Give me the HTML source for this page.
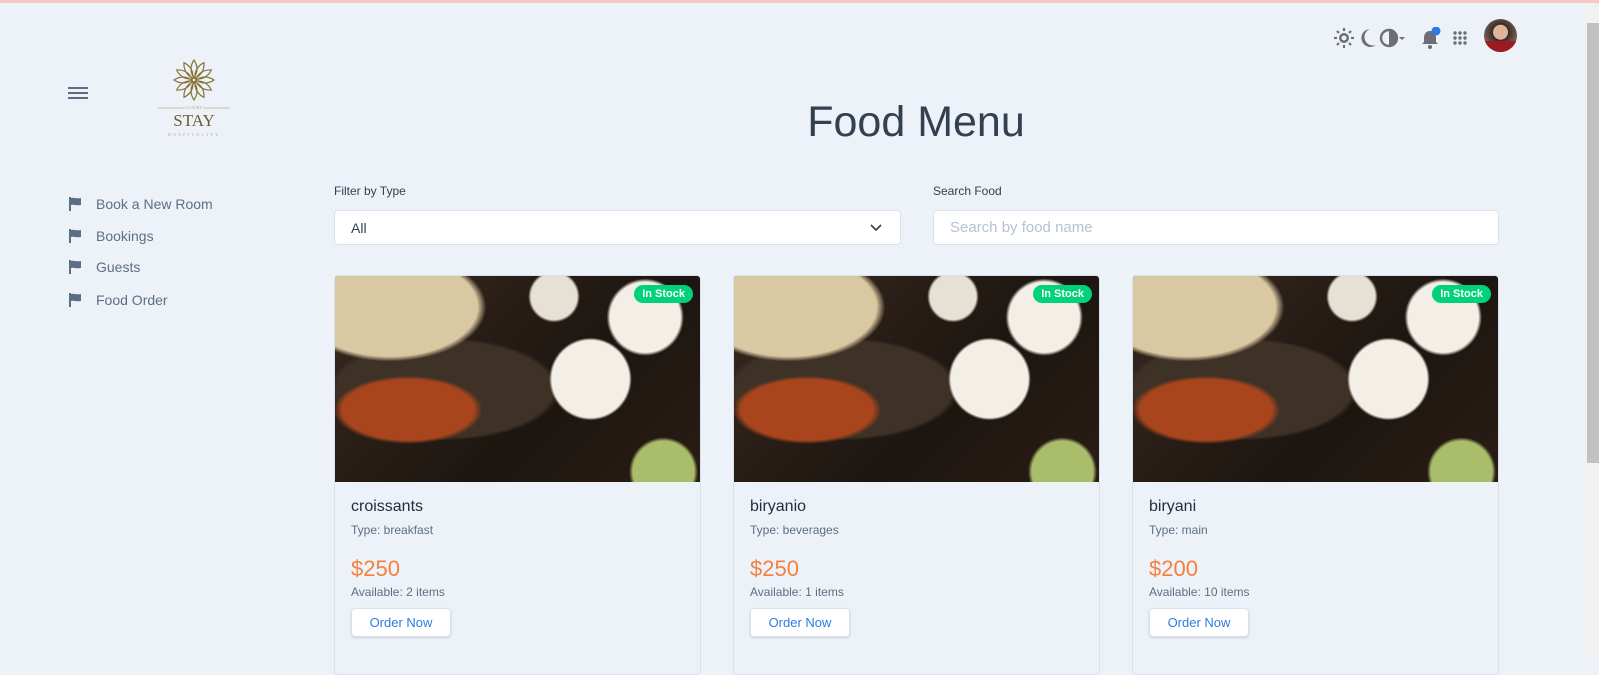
<!DOCTYPE html>
<html><head><meta charset="utf-8"><style>
*{box-sizing:border-box;margin:0;padding:0}
body{width:1599px;height:656px;overflow:hidden;background:#edf2f9;font-family:"Liberation Sans",sans-serif;position:relative;color:#344050}
.topline{position:absolute;left:0;top:0;width:1599px;height:3px;background:#f3c9c2}
.sb{position:absolute;right:0;top:3px;width:14px;height:653px;background:#f1f1f1}
.sb i{position:absolute;left:2px;top:20px;width:12px;height:440px;background:#c1c1c1}
.abs{position:absolute}
.menu div{position:absolute;left:68px;font-size:14px;color:#5e6e82;display:flex;align-items:center}
.menu svg{margin-right:14px}
.card{position:absolute;top:275px;width:367px;height:400px;background:#edf2f9;border:1px solid #d8e2ef;border-radius:4px;overflow:hidden}
.img{height:206px;position:relative;background:
radial-gradient(circle at 85% 20%,#f4efe6 0 10%,transparent 11%),
radial-gradient(circle at 85% 20%,#c9702a 0 8%,transparent 9%),
radial-gradient(circle at 70% 50%,#f4efe6 0 14%,transparent 15%),
radial-gradient(circle at 70% 50%,#c9702a 0 12%,transparent 13%),
radial-gradient(circle at 60% 10%,#e7e0d5 0 8%,transparent 9%),
radial-gradient(ellipse at 15% 15%,#d9c8a2 0 20%,transparent 22%),
radial-gradient(ellipse at 20% 65%,#a8451c 0 16%,transparent 18%),
radial-gradient(ellipse at 30% 55%,#3e3126 0 30%,transparent 32%),
radial-gradient(circle at 90% 95%,#a9bd6b 0 8%,transparent 9%),
linear-gradient(135deg,#3a2a20,#1c1510 60%,#2a1d15)}
.badge{position:absolute;right:7px;top:9px;background:#00d27a;color:#fff;font-weight:bold;font-size:11px;padding:3px 8px;border-radius:12px}
.nm{position:absolute;left:16px;top:222px;font-size:16px;color:#232e3c}
.ty{position:absolute;left:16px;top:247px;font-size:12px;color:#5e6e82}
.pr{position:absolute;left:16px;top:280px;font-size:22px;color:#f5803e}
.av{position:absolute;left:16px;top:309px;font-size:12px;color:#5e6e82}
.bt{position:absolute;left:16px;top:332px;width:100px;height:29px;background:#fff;border:1px solid #d8e2ef;border-radius:4px;box-shadow:0 1px 2px rgba(0,0,0,.15);color:#2c7be5;font-size:13px;display:flex;align-items:center;justify-content:center}
</style></head><body>
<div class="topline"></div>
<div class="sb"><i></i></div>

<svg class="abs" style="left:1334px;top:27px" width="170" height="24" viewBox="0 0 170 24">
<g fill="#6b6e74">
<circle cx="10" cy="11" r="5"/>
<g stroke="#6b6e74" stroke-width="2.2"><line x1="10" y1="1" x2="10" y2="4"/><line x1="10" y1="18" x2="10" y2="21"/><line x1="0" y1="11" x2="3" y2="11"/><line x1="17" y1="11" x2="20" y2="11"/><line x1="3" y1="4" x2="5" y2="6"/><line x1="15" y1="16" x2="17" y2="18"/><line x1="3" y1="18" x2="5" y2="16"/><line x1="15" y1="6" x2="17" y2="4"/></g>
<circle cx="10" cy="11" r="2.5" fill="#edf2f9"/>
<path d="M36 2a9 9 0 1 0 6 16a8 8 0 0 1 -6 -16z"/>
<circle cx="55" cy="11" r="8" fill="none" stroke="#6b6e74" stroke-width="2.4"/><path d="M55 3a8 8 0 0 1 0 16z"/>
<path d="M65 10h6l-3 3z"/>
<path d="M96 4c-4 0-6 3-6 7v4l-2 2h16l-2-2v-4c0-4-2-7-6-7z"/><circle cx="96" cy="20" r="2"/>
<g><circle cx="121" cy="6" r="1.7"/><circle cx="126" cy="6" r="1.7"/><circle cx="131" cy="6" r="1.7"/><circle cx="121" cy="11" r="1.7"/><circle cx="126" cy="11" r="1.7"/><circle cx="131" cy="11" r="1.7"/><circle cx="121" cy="16" r="1.7"/><circle cx="126" cy="16" r="1.7"/><circle cx="131" cy="16" r="1.7"/></g>
</g>
<circle cx="102" cy="4" r="4.5" fill="#2c7be5"/>
</svg>
<div class="abs" style="left:1484px;top:19px;width:33px;height:33px;border-radius:50%;background:radial-gradient(circle at 50% 40%,#e0b49a 0 28%,#3a2a24 30%,#6a5a50 60%);overflow:hidden"><div style="position:absolute;bottom:0;left:0;width:33px;height:11px;background:#9c1a22"></div></div>

<div class="abs" style="left:68px;top:87px;width:20px;height:2px;background:#5e6e82;box-shadow:0 5px 0 #5e6e82,0 10px 0 #5e6e82"></div>

<svg class="abs" style="left:155px;top:56px" width="80" height="84" viewBox="0 0 80 84">
<g fill="none" stroke="#8a7433" stroke-width="1.2" transform="translate(39,24)">
<g id="p"><path d="M0 -2 C-4 -8 -4 -14 0 -20 C4 -14 4 -8 0 -2z"/></g>
<use href="#p" transform="rotate(30)"/><use href="#p" transform="rotate(60)"/><use href="#p" transform="rotate(90)"/><use href="#p" transform="rotate(120)"/><use href="#p" transform="rotate(150)"/><use href="#p" transform="rotate(180)"/><use href="#p" transform="rotate(210)"/><use href="#p" transform="rotate(240)"/><use href="#p" transform="rotate(270)"/><use href="#p" transform="rotate(300)"/><use href="#p" transform="rotate(330)"/>
</g>
<line x1="3" y1="52" x2="30" y2="52" stroke="#c9c2a8"/><line x1="48" y1="52" x2="75" y2="52" stroke="#c9c2a8"/>
<text x="39" y="53" font-size="4" fill="#b8ad88" text-anchor="middle" font-family="Liberation Serif">LUXURY</text>
<text x="39" y="70" font-size="17" fill="#6e5e2a" text-anchor="middle" font-family="Liberation Serif">STAY</text>
<text x="39" y="80" font-size="4.5" fill="#b8ad88" text-anchor="middle" letter-spacing="2.2" font-family="Liberation Serif">HOSPITALITY</text>
</svg>

<div class="menu">
<div style="top:196px"><svg width="14" height="14" viewBox="0 0 14 14"><path d="M1 0h2v14h-2zM3 1c3-1 5 1 10 0v7c-5 1-7-1-10 0z" fill="#5e6e82"/></svg>Book a New Room</div>
<div style="top:228px"><svg width="14" height="14" viewBox="0 0 14 14"><path d="M1 0h2v14h-2zM3 1c3-1 5 1 10 0v7c-5 1-7-1-10 0z" fill="#5e6e82"/></svg>Bookings</div>
<div style="top:259px"><svg width="14" height="14" viewBox="0 0 14 14"><path d="M1 0h2v14h-2zM3 1c3-1 5 1 10 0v7c-5 1-7-1-10 0z" fill="#5e6e82"/></svg>Guests</div>
<div style="top:292px"><svg width="14" height="14" viewBox="0 0 14 14"><path d="M1 0h2v14h-2zM3 1c3-1 5 1 10 0v7c-5 1-7-1-10 0z" fill="#5e6e82"/></svg>Food Order</div>
</div>

<div class="abs" style="left:700px;top:98px;width:432px;text-align:center;font-size:43px;color:#344050">Food Menu</div>

<div class="abs" style="left:334px;top:184px;font-size:12px;color:#344050">Filter by Type</div>
<div class="abs" style="left:334px;top:210px;width:567px;height:35px;background:#fff;border:1px solid #d8e2ef;border-radius:4px;font-size:14px;color:#344050;padding:9px 16px">All
<svg style="position:absolute;right:18px;top:13px" width="12" height="8" viewBox="0 0 12 8"><path d="M1 1l5 5 5-5" fill="none" stroke="#344050" stroke-width="1.6"/></svg></div>
<div class="abs" style="left:933px;top:184px;font-size:12px;color:#344050">Search Food</div>
<div class="abs" style="left:933px;top:210px;width:566px;height:35px;background:#fff;border:1px solid #d8e2ef;border-radius:4px;font-size:15px;color:#b6c1d2;padding:8px 16px">Search by food name</div>

<div class="card" style="left:334px"><div class="img"><span class="badge">In Stock</span></div>
<div class="nm">croissants</div><div class="ty">Type: breakfast</div><div class="pr">$250</div><div class="av">Available: 2 items</div><div class="bt">Order Now</div></div>
<div class="card" style="left:733px"><div class="img"><span class="badge">In Stock</span></div>
<div class="nm">biryanio</div><div class="ty">Type: beverages</div><div class="pr">$250</div><div class="av">Available: 1 items</div><div class="bt">Order Now</div></div>
<div class="card" style="left:1132px"><div class="img"><span class="badge">In Stock</span></div>
<div class="nm">biryani</div><div class="ty">Type: main</div><div class="pr">$200</div><div class="av">Available: 10 items</div><div class="bt">Order Now</div></div>
</body></html>
